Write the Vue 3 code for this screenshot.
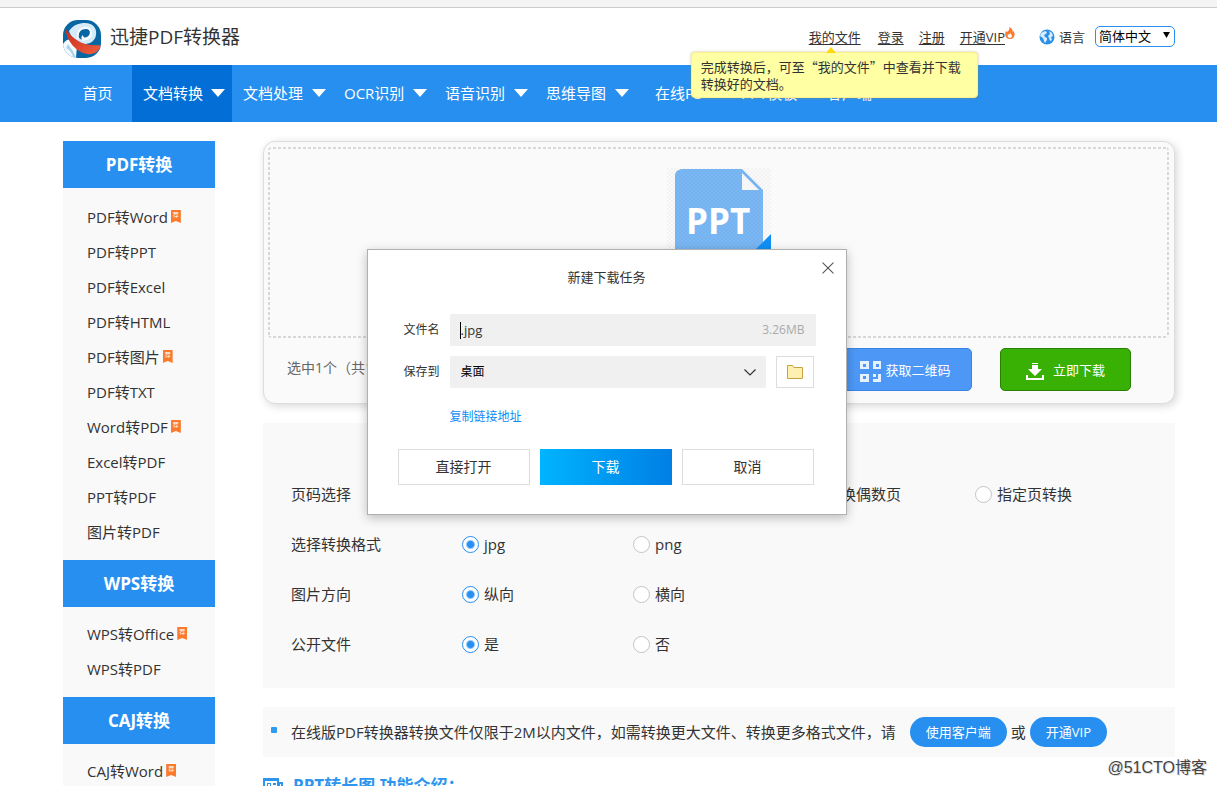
<script setup>
import { ref } from 'vue'

const navItems = [
  { label: '首页', kind: 'home' },
  { label: '文档转换', arrow: true, active: true },
  { label: '文档处理', arrow: true },
  { label: 'OCR识别', arrow: true },
  { label: '语音识别', arrow: true },
  { label: '思维导图', arrow: true },
  { label: '在线PS', kind: 'plain' },
  { label: 'PPT模板', kind: 'plain' },
  { label: '客户端', kind: 'plain', arrow: true }
]

const groups = [
  {
    title: 'PDF转换',
    items: [
      ['PDF转Word', true],
      ['PDF转PPT'],
      ['PDF转Excel'],
      ['PDF转HTML'],
      ['PDF转图片', true],
      ['PDF转TXT'],
      ['Word转PDF', true],
      ['Excel转PDF'],
      ['PPT转PDF'],
      ['图片转PDF']
    ]
  },
  { title: 'WPS转换', items: [['WPS转Office', true], ['WPS转PDF']] },
  { title: 'CAJ转换', items: [['CAJ转Word', true]] }
]

const optionRows = [
  { name: 'pages', label: '页码选择', options: [{ text: '转换偶数页', col: 'c3' }, { text: '指定页转换', col: 'c4' }] },
  { name: 'format', label: '选择转换格式', options: [{ text: 'jpg', col: 'c1', on: true }, { text: 'png', col: 'c2' }] },
  { name: 'direction', label: '图片方向', options: [{ text: '纵向', col: 'c1', on: true }, { text: '横向', col: 'c2' }] },
  { name: 'public', label: '公开文件', options: [{ text: '是', col: 'c1', on: true }, { text: '否', col: 'c2' }] }
]

const fileName = ref('.jpg')
</script>

<template>
  <div class="page">
    <div class="strip"></div>
    <header class="header">
      <a class="brand" href="#">
        <svg class="logo" viewBox="0 0 38 38" aria-hidden="true">
          <defs>
            <clipPath id="logoClip"><rect width="38" height="38" rx="15" /></clipPath>
            <linearGradient id="logoRed" x1="0" y1="0" x2="1" y2="1">
              <stop offset="0" stop-color="#c9281c" />
              <stop offset="1" stop-color="#f0603f" />
            </linearGradient>
          </defs>
          <g clip-path="url(#logoClip)">
            <rect width="38" height="38" fill="#0866a2" />
            <path d="M0 24 Q5 17 10 21 L14 25 L13 38 H0Z" fill="#f5fbff" />
            <path d="M6 11 C10 5 16 3 22 3 C30 3 34 8 33 15 C32 22 25 25 18 24 C12 22 8 17 6 11Z" fill="#d5ebf9" />
            <path d="M14 19 C13 10 18 6 24 7 C31 8 31 18 24 20 C21 21 18 21 17 19Z" fill="#f5fbff" />
            <path d="M16 18 C15 12 18 9 23 9 C28 9 28 15 24 17 C21 18 20 17 20 15 C18 16 18 18 19 20Z" fill="#0866a2" />
            <path d="M5 24 Q10 30 13 38 H10 Q9 31 3 28Z" fill="#a9d3ee" />
            <path d="M2 8 C9 19 20 27 38 25 C36 32 30 35 24 34 C13 32 4 22 2 8Z" fill="url(#logoRed)" />
          </g>
        </svg>
        <span>迅捷PDF转换器</span>
      </a>
      <div class="tools">
        <span class="files">
          <a href="#">我的文件</a>
          <span class="tooltip" role="tooltip">完成转换后，可至“我的文件”中查看并下载转换好的文档。</span>
        </span>
        <a href="#">登录</a>
        <a href="#">注册</a>
        <span class="vip">
          <a href="#">开通VIP</a>
          <svg class="flame" viewBox="0 0 10 12" aria-hidden="true">
            <path d="M4 0 C7 1 8 3 7.500 5 L8.500 4 C11 8 9 12 5 12 C1 12 -1 8 1 4 L2 5 C4 4 5 2 4 0Z" fill="#fb7a2e" />
            <path d="M5 6 C8 8 7 11 5 11 C3 11 2 9 3 7 L4 8Z" fill="#fff" />
          </svg>
        </span>
        <label class="lang" for="lang">
          <svg viewBox="0 0 16 16" aria-hidden="true">
            <circle cx="8" cy="8" r="7.500" fill="#2a8fe8" />
            <path d="M2 4 L6 2 L8 3 L7 5 L5 6 L6 8 L8 9 L8 11 L6 14 L5 12 L4 9 L1 7Z M10 2 L13 4 L14 7 L12 8 L13 11 L11 12 L10 9 L9 7 L11 5Z" fill="#d9ecfc" />
          </svg>
          语言
        </label>
        <span class="lang-box">
          <select id="lang"><option>简体中文</option></select>
          <svg viewBox="0 0 8 7" aria-hidden="true"><path d="M0 0H8L4 7Z" fill="#000" /></svg>
        </span>
      </div>
    </header>

    <nav class="nav">
      <a v-for="n in navItems" :key="n.label" href="#" :class="['nav-item', n.kind, { active: n.active }]">
        <span>{{ n.label }}</span>
        <i v-if="n.arrow" class="tri"></i>
      </a>
    </nav>

    <div class="body">
      <aside class="side">
        <section v-for="g in groups" :key="g.title">
          <h2>{{ g.title }}</h2>
          <ul>
            <li v-for="it in g.items" :key="it[0]">
              <a href="#">{{ it[0] }}</a>
              <span v-if="it[1]" class="badge">荐</span>
            </li>
          </ul>
        </section>
      </aside>

      <main class="main">
        <section class="card">
          <div class="drop">
            <svg class="ppt" viewBox="0 0 104 104" aria-label="PPT">
              <defs>
                <pattern id="check" width="4" height="4" patternUnits="userSpaceOnUse">
                  <path d="M0 0H2V2H0Z M2 2H4V4H2Z" fill="#000" fill-opacity=".03" />
                </pattern>
              </defs>
              <path d="M14 1 H75 L96 22 V104 H8 V7 Q8 3 14 1Z" fill="#7ab8f5" />
              <path d="M75 5 V22 H92Z" fill="#fafafa" />
              <rect width="104" height="104" fill="url(#check)" />
              <path d="M104 66 V104 H66Z" fill="#0f8ff8" />
              <text x="19" y="66">PPT</text>
            </svg>
          </div>
          <div class="actions">
            <span class="count">选中1个（共1</span>
            <button class="btn qr" type="button">
              <svg viewBox="0 0 21 21" aria-hidden="true">
                <path fill-rule="evenodd" fill="#e6f1ff" d="M0 0H9V8H0Z M3 3V6H6V3Z M13 0H21V8H13Z M16 3V6H19V3Z M0 13H9V21H0Z M3 15V18H6V15Z M13 13H16V16H13Z M18 13H21V21H13V18H18Z" />
              </svg>
              获取二维码
            </button>
            <button class="btn down" type="button">
              <svg viewBox="0 0 18 17" aria-hidden="true">
                <path fill="#fff" d="M6 0H12V1H6Z M6 2H12V6H16L9 13L2 6H6Z M0 12H2V15H16V12H18V17H0Z" />
              </svg>
              立即下载
            </button>
          </div>
        </section>

        <section class="options">
          <div v-for="r in optionRows" :key="r.name" class="opt-row" role="radiogroup" :aria-label="r.label">
            <span class="opt-label">{{ r.label }}</span>
            <label v-for="o in r.options" :key="o.text" :class="o.col">
              <input type="radio" :name="r.name" :checked="o.on" />
              {{ o.text }}
            </label>
          </div>
        </section>

        <section class="notice">
          <i class="dot"></i>
          <span class="notice-text">在线版PDF转换器转换文件仅限于2M以内文件，如需转换更大文件、转换更多格式文件，请</span>
          <a class="pill" href="#">使用客户端</a>
          <span>或</span>
          <a class="pill" href="#">开通VIP</a>
        </section>

        <h3 class="intro">
          <svg viewBox="0 0 20 16" aria-hidden="true">
            <path fill="#2e95ee" fill-rule="evenodd" d="M0 0H16V4H20V16H0Z M2 3V14H14V3Z M17 6V14H18V6Z" />
            <path fill="#2e95ee" d="M4 5H8V9H4Z M10 5H13V7H10Z M4 11H12V12H4Z" />
            <path fill="#fff" d="M5 6H7V8H5Z" />
          </svg>
          PPT转长图 功能介绍：
        </h3>
      </main>
    </div>

    <div class="watermark">@51CTO博客</div>

    <form class="dialog" role="dialog" aria-labelledby="dlgTitle" @submit.prevent>
      <button class="close" type="button" aria-label="关闭">
        <svg viewBox="0 0 11 11"><path d="M.5 .5L10.500 10.500M10.500 .5L.5 10.500" stroke="#555" stroke-width="1" /></svg>
      </button>
      <h4 id="dlgTitle">新建下载任务</h4>
      <div class="field">
        <label for="fname">文件名</label>
        <span class="name-box">
          <i class="caret"></i>
          <input id="fname" v-model="fileName" type="text" />
          <span class="size">3.26MB</span>
        </span>
      </div>
      <div class="field">
        <label for="dest">保存到</label>
        <span class="dest-box">
          <select id="dest"><option>桌面</option></select>
          <svg viewBox="0 0 12 7" aria-hidden="true"><path d="M.5 .5L6 6L11.500 .5" fill="none" stroke="#333" stroke-width="1.200" /></svg>
        </span>
        <button class="folder" type="button" aria-label="浏览">
          <svg viewBox="0 0 16 14"><path d="M.5 13.500V.5H5.500L7 2.500H15.500V13.500Z" fill="#fff0b0" stroke="#c9a040" /></svg>
        </button>
      </div>
      <a class="copy" href="#">复制链接地址</a>
      <div class="dlg-btns">
        <button type="button">直接打开</button>
        <button type="submit" class="primary">下载</button>
        <button type="button">取消</button>
      </div>
    </form>
  </div>
</template>

<style>
body {
  background: #fff;
}
</style>

<style scoped>
.page {
  position: relative;
  height: 100vh;
  overflow: hidden;
  color: #333;
  font: 15px/20px "Open Sans", "Noto Sans CJK SC", sans-serif;
}
.page * {
  box-sizing: border-box;
}
a {
  color: inherit;
  text-decoration: none;
}
button,
input,
select {
  font: inherit;
  color: inherit;
  margin: 0;
  padding: 0;
}
svg {
  display: block;
  flex: none;
}
.strip {
  height: 8px;
  background: #f4f4f4;
  border-bottom: 1px solid #ccc;
}
.header {
  display: flex;
  justify-content: space-between;
  align-items: center;
  height: 57px;
  padding: 0 42px 0 63px;
}
.brand {
  display: flex;
  align-items: center;
  gap: 9px;
  font-size: 19px;
  padding-top: 4px;
}
.brand span {
  padding-bottom: 4px;
}
.logo {
  width: 38px;
  height: 38px;
}
.tools {
  display: flex;
  align-items: center;
  gap: 15px;
  font-size: 13px;
}
.tools a {
  text-decoration: underline;
  text-underline-offset: 2px;
}
.files {
  position: relative;
  margin-right: 2px;
}
.tooltip {
  position: absolute;
  z-index: 5;
  top: 25px;
  left: -118px;
  width: 287px;
  padding: 5px 9px;
  border: 1px solid #ffee90;
  border-radius: 4px;
  background: #ffffa3;
  box-shadow: 0 0 3px rgba(160, 150, 60, .5);
  font-family: "Noto Sans CJK SC", sans-serif;
  line-height: 17px;
}
.tooltip::before {
  content: "";
  position: absolute;
  top: -6px;
  left: 134px;
  border: 5px solid transparent;
  border-top: 0;
  border-bottom: 6px solid #ffd90c;
}
.vip {
  display: flex;
  margin-right: 6px;
}
.flame {
  width: 10px;
  height: 12px;
}
.lang {
  display: flex;
  align-items: center;
  gap: 4px;
  margin-left: 3px;
}
.lang svg {
  width: 16px;
  height: 16px;
}
.lang-box {
  position: relative;
  margin-left: -5px;
}
.lang-box select {
  display: block;
  appearance: none;
  width: 80px;
  height: 21px;
  padding: 0 3px;
  border: 1px solid #2a8fef;
  border-radius: 5px;
  background: #fff;
  color: #000;
  line-height: 19px;
}
.lang-box svg {
  position: absolute;
  right: 5px;
  top: 6px;
  width: 7px;
  height: 6px;
  pointer-events: none;
}
.nav {
  display: flex;
  height: 57px;
  padding-left: 63px;
  background: #278ff0;
  color: #fff;
}
.nav-item {
  display: flex;
  align-items: center;
  justify-content: space-between;
  flex: 0 0 101px;
  padding: 0 7px 2px 11px;
}
.nav-item.active {
  flex-basis: 100px;
  background: #036fd6;
}
.nav-item.home {
  flex-basis: 69px;
  justify-content: center;
  padding: 0 0 2px;
}
.nav-item.plain {
  flex-basis: 86px;
  justify-content: flex-start;
  gap: 3px;
  padding: 0 0 2px 19px;
  white-space: nowrap;
}
.tri {
  border: 7px solid transparent;
  border-top: 8px solid #fff;
  border-bottom: 0;
}
.body {
  display: flex;
  align-items: flex-start;
  gap: 48px;
  padding: 19px 42px 0 63px;
}
.side {
  flex: 0 0 152px;
  background: #f9f9f9;
}
.side h2 {
  margin: 0;
  background: #278ff0;
  color: #fff;
  font-size: 17px;
  line-height: 47px;
  text-align: center;
}
.side ul {
  margin: 0;
  padding: 9px 0 11px 24px;
  list-style: none;
}
.side section:first-child ul {
  padding: 11px 0 11px 24px;
}
.side li {
  display: flex;
  align-items: center;
  gap: 3px;
  height: 35px;
}
.badge {
  width: 10px;
  height: 13px;
  background: #fb7a2e;
  clip-path: polygon(0 0, 100% 0, 100% 100%, 50% 85%, 0 100%);
  color: #fff;
  font-size: 6px;
  line-height: 11px;
  text-align: center;
}
.main {
  flex: 1;
  min-width: 0;
}
.card {
  padding: 5px 5px 12px 4px;
  border: 1px solid #ddd;
  border-radius: 12px;
  background: #fafafa;
  box-shadow: 2px 2px 8px rgba(0, 0, 0, .16);
}
.drop {
  --dash: #d8d8d8 0 3px, transparent 3px 5px;
  display: flex;
  justify-content: center;
  height: 191px;
  padding-top: 21px;
  border-radius: 4px;
  background:
    repeating-linear-gradient(90deg, var(--dash)) top / 100% 2px no-repeat,
    repeating-linear-gradient(90deg, var(--dash)) bottom / 100% 2px no-repeat,
    repeating-linear-gradient(180deg, var(--dash)) left / 2px 100% no-repeat,
    repeating-linear-gradient(180deg, var(--dash)) right / 2px 100% no-repeat;
}
.ppt {
  width: 104px;
  height: 104px;
}
.ppt text {
  fill: #fff;
  font-size: 35px;
  font-weight: 700;
}
.actions {
  display: flex;
  align-items: center;
  gap: 28px;
  padding: 10px 38px 0 19px;
}
.count {
  margin-right: auto;
  padding-bottom: 3px;
  color: #666;
  font-size: 14px;
}
.btn {
  display: flex;
  align-items: center;
  justify-content: center;
  width: 131px;
  height: 43px;
  border: 1px solid #3a83e4;
  border-radius: 5px;
  background: #4d98f7;
  color: #fff;
  font-size: 13px;
}
.qr {
  width: 133px;
  gap: 4px;
}
.qr svg {
  width: 21px;
  height: 21px;
  margin-top: 3px;
}
.down {
  gap: 9px;
  border-color: #278002;
  background: #39b004;
}
.down svg {
  width: 18px;
  height: 17px;
  margin-top: 4px;
}
.options {
  margin-top: 19px;
  padding: 46px 28px 19px;
  background: #f9f9f9;
}
.opt-row {
  display: grid;
  grid-template-columns: repeat(5, 171px);
  align-items: center;
  height: 50px;
}
.opt-row label {
  display: flex;
  align-items: center;
  gap: 5px;
  grid-row: 1;
}
.c1 { grid-column: 2; }
.c2 { grid-column: 3; }
.c3 { grid-column: 4; }
.c4 { grid-column: 5; }
.opt-row input {
  appearance: none;
  width: 17px;
  height: 17px;
  border: 1px solid #c4c4c4;
  border-radius: 50%;
  background: #fff;
}
.opt-row input:checked {
  border-color: #278ff0;
  background: radial-gradient(circle, #278ff0 3px, #fff 5px);
}
.notice {
  display: flex;
  align-items: center;
  gap: 4px;
  height: 50px;
  margin-top: 19px;
  padding-left: 8px;
  background: #f9f9f9;
}
.notice-text {
  margin-right: 10px;
}
.dot {
  width: 6px;
  height: 6px;
  margin: 0 10px 5px 0;
  border-radius: 1px;
  background: #2e9bf0;
}
.pill {
  padding: 0 16px;
  border-radius: 15px;
  background: #278ff0;
  color: #fff;
  font-size: 13px;
  line-height: 30px;
}
.intro {
  display: flex;
  align-items: center;
  gap: 10px;
  margin: 19px 0 0;
  color: #2e95ee;
  font-size: 17px;
}
.intro svg {
  width: 20px;
  height: 16px;
}
.watermark {
  position: absolute;
  right: 10px;
  bottom: 8px;
  color: #444;
  font: 16px/20px "Liberation Sans", "Noto Sans CJK SC", sans-serif;
  text-shadow: 1px 1px 0 #ddd;
}
.dialog {
  position: absolute;
  z-index: 10;
  top: 249px;
  left: 50%;
  width: 480px;
  margin-left: -242px;
  padding: 17px 30px 29px;
  border: 1px solid #b0b0b0;
  background: #fff;
  box-shadow: 0 3px 10px rgba(0, 0, 0, .25);
  font-size: 12px;
}
.dialog h4 {
  margin: 0 0 27px;
  font-size: 13px;
  font-weight: 400;
  text-align: center;
}
.close {
  position: absolute;
  top: 12px;
  right: 12px;
  border: 0;
  background: none;
}
.close svg {
  width: 12px;
  height: 12px;
}
.field {
  display: flex;
  align-items: center;
  height: 32px;
  margin-bottom: 10px;
}
.field label {
  flex: 0 0 52px;
  padding-left: 6px;
}
.name-box {
  display: flex;
  align-items: center;
  flex: 0 0 366px;
  height: 32px;
  padding: 0 11px 0 10px;
  background: #f0f0f0;
}
.caret {
  flex: none;
  width: 1px;
  height: 17px;
  background: #000;
}
.name-box input {
  flex: 1;
  min-width: 0;
  height: 30px;
  border: 0;
  outline: 0;
  background: none;
  font-size: 13px;
}
.size {
  color: #aaa;
}
.dest-box {
  position: relative;
  flex: 0 0 316px;
  margin-right: 10px;
}
.dest-box select {
  display: block;
  appearance: none;
  width: 100%;
  height: 32px;
  padding: 0 11px;
  border: 0;
  border-radius: 0;
  background: #f0f0f0;
  color: #000;
}
.dest-box svg {
  position: absolute;
  top: 13px;
  right: 10px;
  width: 12px;
  height: 7px;
  pointer-events: none;
}
.folder {
  display: flex;
  align-items: center;
  justify-content: center;
  width: 38px;
  height: 32px;
  border: 1px solid #ddd;
  background: #fff;
}
.folder svg {
  width: 16px;
  height: 14px;
}
.copy {
  display: block;
  margin: 19px 0 22px 52px;
  color: #0e8cf5;
}
.dlg-btns {
  display: flex;
  gap: 10px;
}
.dlg-btns button {
  width: 132px;
  height: 36px;
  border: 1px solid #ddd;
  background: #fff;
  font-size: 14px;
}
.dlg-btns .primary {
  border: 0;
  background: linear-gradient(90deg, #00b4ff, #007fe4);
  color: #fff;
}
</style>
